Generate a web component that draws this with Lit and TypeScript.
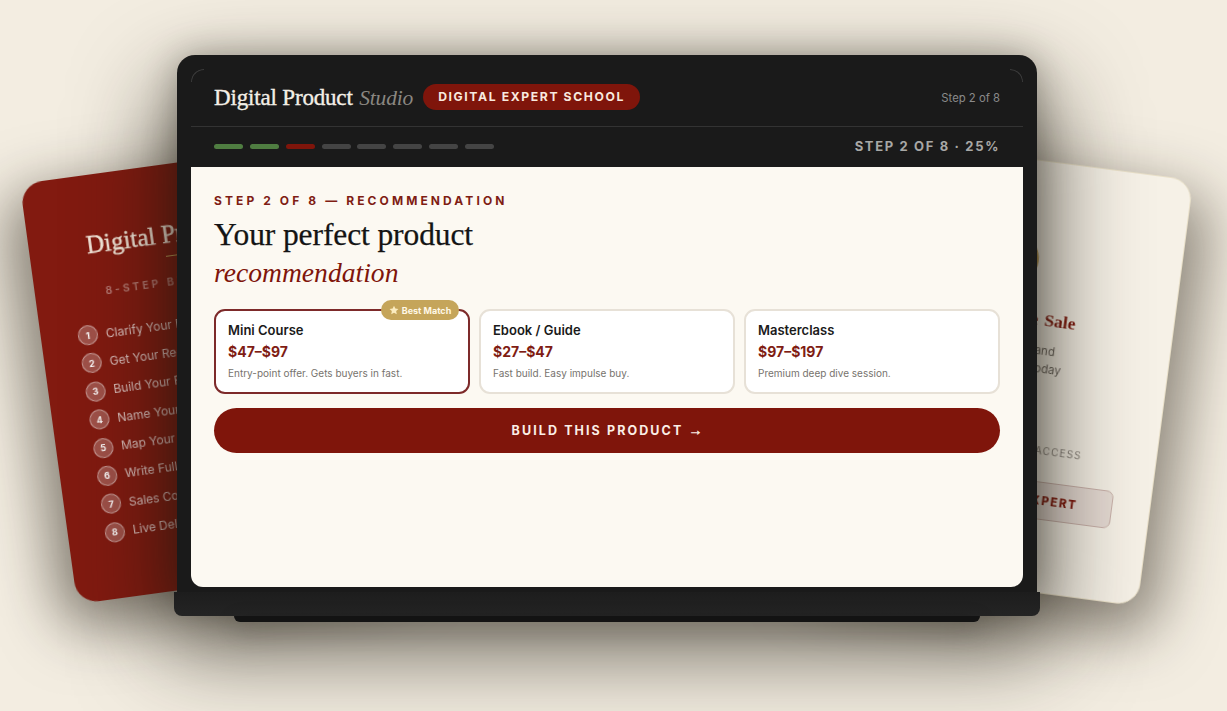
import { LitElement, html, css } from "lit";
import { customElement } from "lit/decorators.js";

const STEPS = ["Clarify Your Product", "Get Your Recommendation", "Build Your Framework", "Name Your Product", "Map Your Content", "Write Full Content", "Sales Copy", "Live Delivery"];
const SEGS = ["done", "done", "now", "", "", "", "", ""];
const PRODUCTS = [
  { name: "Mini Course", price: "$47–$97", desc: "Entry-point offer. Gets buyers in fast.", best: true },
  { name: "Ebook / Guide", price: "$27–$47", desc: "Fast build. Easy impulse buy.", best: false },
  { name: "Masterclass", price: "$97–$197", desc: "Premium deep dive session.", best: false },
];

@customElement("app-root")
export class AppRoot extends LitElement {
  static styles = css`
    :host { display: block; font-family: Inter, "Liberation Sans", sans-serif; }
    * { box-sizing: border-box; }
    .stage { position: relative; width: 1227px; height: 711px; overflow: hidden; background: #f3ede1; padding: 55px 0 0 174px; }

    .side { position: absolute; border-radius: 22px; display: flex; flex-direction: column; align-items: center; width: 340px; }
    .left { top: 159px; height: 424px; left: 47px; transform: rotate(-7.8deg); background: #821a10; padding-top: 56px; color: #fff; box-shadow: -12px 18px 60px 6px rgba(35,28,16,.55); filter: blur(.35px); }
    .right { top: 156px; height: 430px; left: 827px; transform: rotate(7.5deg); background: #f6f1e7; border: 1.5px solid #e9e0c9; padding-top: 72.5px; box-shadow: 14px 22px 60px 6px rgba(35,28,16,.5); filter: blur(.35px); }
    .card-title { font: 400 25px/28px "Liberation Serif", serif; white-space: nowrap; color: #f6e9dc; -webkit-text-stroke: .35px #f6e9dc; }
    .rule { width: 70px; height: 1px; margin-top: 7px; background: #c5a55a; }
    .card-label { margin-top: 19px; font-size: 10.5px; line-height: 14px; font-weight: 600; letter-spacing: 3px; color: rgba(255,255,255,.42); white-space: nowrap; }
    .steps { margin-top: 24px; align-self: stretch; padding-left: 37px; display: flex; flex-direction: column; gap: 8.4px; }
    .step { display: flex; align-items: center; gap: 8px; height: 20px; font-size: 12px; color: rgba(255,255,255,.72); white-space: nowrap; }
    .num { width: 20px; height: 20px; border-radius: 50%; display: flex; align-items: center; justify-content: center; background: rgba(255,255,255,.24); border: 1.5px solid rgba(255,255,255,.45); font-size: 9px; font-weight: 700; color: #fff; }

    .emblem { width: 54px; height: 54px; border-radius: 50%; background: #b8964e; }
    .sale-title { margin: 17px 6px 0 0; font: 700 17.5px/26px "Liberation Serif", serif; word-spacing: 2px; color: #7f150b; white-space: nowrap; }
    .sale-desc { margin-top: 9px; font-size: 11.5px; line-height: 18px; color: #6c6660; text-align: center; }
    .access { margin-top: 65px; font-size: 10px; line-height: 14px; letter-spacing: 1.2px; color: #87817a; white-space: nowrap; }
    .outline { margin-top: 24px; width: 264px; height: 38px; border: 1px solid #c9b1aa; border-radius: 7px; background: #e6dbd4; display: flex; align-items: center; justify-content: center; font-size: 11.5px; font-weight: 800; letter-spacing: 1.6px; color: #7f150b; white-space: nowrap; }

    .laptop { position: relative; width: 866px; display: flex; flex-direction: column; align-items: center; }
    .shell { width: 860px; height: 537px; border-radius: 18px 18px 0 0; background: #1a1a1a; padding: 14px 14px 5px; box-shadow: 0 44px 90px 12px rgba(30,25,15,.68), 0 0 34px rgba(30,25,15,.3); }
    .screen { position: relative; height: 100%; display: flex; flex-direction: column; border-radius: 12px; overflow: hidden; }
    .arc { position: absolute; top: 0; width: 13px; height: 13px; border-top: 1px solid #3c3c3c; }
    .arc.l { left: 0; border-left: 1px solid #3c3c3c; border-top-left-radius: 13px; }
    .arc.r { right: 0; border-right: 1px solid #3c3c3c; border-top-right-radius: 13px; }
    .head { height: 58px; flex: none; display: flex; align-items: center; padding: 0 23px; border-bottom: 1px solid #333; }
    .brand { font: 400 23px/28px "Liberation Serif", serif; color: #f3efe7; white-space: nowrap; -webkit-text-stroke: .35px #f3efe7; letter-spacing: -.17px; }
    .brand i { color: #8a8781; font-size: 21.5px; margin-left: 1px; -webkit-text-stroke: 0; }
    .pill { margin: -2px 0 0 10px; height: 26px; padding: 0 15px; border-radius: 13px; background: #7f150b; color: #f8e9df; display: flex; align-items: center; font-size: 12.2px; font-weight: 700; letter-spacing: 1.6px; white-space: nowrap; }
    .count { margin-left: auto; font-size: 11.3px; color: #8a8a8a; white-space: nowrap; }
    .prog { height: 40px; flex: none; display: flex; align-items: center; padding: 0 23px 2px; gap: 6.85px; }
    .seg { width: 29px; height: 5px; border-radius: 3px; background: #444; }
    .seg.done { background: #4f7d41; }
    .seg.now { background: #7f150b; }
    .pct { margin-left: auto; font-size: 13px; font-weight: 700; letter-spacing: 1.65px; color: #a8a8a6; white-space: nowrap; }

    .body { flex: 1; background: #fcf9f2; padding: 26px 23px 0; display: flex; flex-direction: column; }
    .eyebrow { font-size: 12px; line-height: 16px; font-weight: 700; letter-spacing: 3.1px; color: #7f1d14; white-space: nowrap; }
    h1 { margin: 7px 0 0; font: 400 31.5px/38px "Liberation Serif", serif; color: #141414; letter-spacing: -.1px; -webkit-text-stroke: .25px #141414; }
    h1 em { display: block; color: #7f150b; font-size: 27.6px; letter-spacing: 0; -webkit-text-stroke: 0; }
    .cards { margin-top: 17px; display: grid; grid-template-columns: repeat(3, 1fr); gap: 9px; }
    .card { position: relative; height: 85px; background: #fff; border: 2px solid #e7e1d7; border-radius: 11px; padding: 11px 12px; display: flex; flex-direction: column; }
    .card.best { border-color: #7d2a2a; }
    .name { font-size: 13px; line-height: 17px; font-weight: 600; color: #1a1a1a; }
    .price { margin-top: 4px; font-size: 14px; line-height: 18px; font-weight: 700; color: #7f1d14; }
    .desc { margin-top: 6px; font-size: 10px; line-height: 13px; color: #77736d; white-space: nowrap; }
    .badge { position: absolute; top: -11px; right: 9px; height: 20px; width: 78px; border-radius: 10px; background: #c5a55a; color: #fff8e6; display: flex; align-items: center; justify-content: center; gap: 3px; font-size: 9px; font-weight: 700; white-space: nowrap; }
    .badge svg { width: 10px; height: 10px; fill: #fbecc0; flex: none; }
    .cta { margin-top: 14px; height: 45px; border: 0; border-radius: 23px; background: #7f150b; color: #fbeee6; font: 700 12.5px Inter, sans-serif; letter-spacing: 2.1px; padding: 0 0 1px; }
    .arrow { font-family: "Liberation Sans", sans-serif; font-size: 14px; letter-spacing: 0; -webkit-text-stroke: .4px #fbeee6; }

    .base { width: 866px; height: 24px; background: linear-gradient(#1d1d1d, #242424); border-radius: 0 0 8px 8px; }
    .foot { width: 746px; height: 6px; background: #131313; border-radius: 0 0 6px 6px; box-shadow: 0 8px 22px rgba(20,16,10,.3); }
  `;

  render() {
    return html`<div class="stage">
      <div class="side left">
        <div class="card-title">Digital Product Studio</div>
        <div class="rule"></div>
        <div class="card-label">8-STEP BUILD BLUEPRINT</div>
        <div class="steps">
          ${STEPS.map((s, i) => html`<div class="step"><span class="num">${i + 1}</span><span>${s}</span></div>`)}
        </div>
      </div>
      <div class="side right">
        <div class="emblem"></div>
        <div class="sale-title">Launch a Live Sale</div>
        <div class="sale-desc">Your offer, copy and<br />sales page ready today</div>
        <div class="access">SECURE YOUR INSTANT ACCESS</div>
        <div class="outline">BECOME A DIGITAL EXPERT</div>
      </div>
      <div class="laptop">
        <div class="shell">
          <div class="screen">
            <span class="arc l"></span><span class="arc r"></span>
            <div class="head">
              <span class="brand">Digital Product <i>Studio</i></span>
              <span class="pill">DIGITAL EXPERT SCHOOL</span>
              <span class="count">Step 2 of 8</span>
            </div>
            <div class="prog">
              ${SEGS.map((c) => html`<span class="seg ${c}"></span>`)}
              <span class="pct">STEP 2 OF 8 · 25%</span>
            </div>
            <div class="body">
              <div class="eyebrow">STEP 2 OF 8 — RECOMMENDATION</div>
              <h1>Your perfect product<em>recommendation</em></h1>
              <div class="cards">
                ${PRODUCTS.map((p) => html`<div class="card ${p.best ? "best" : ""}">
                  ${p.best ? html`<span class="badge"><svg viewBox="0 0 24 24"><path d="M12 1.5l3.2 6.9 7.5.9-5.5 5.2 1.4 7.5L12 18.4l-6.6 3.6 1.4-7.5L1.3 9.3l7.5-.9z"/></svg>Best Match</span>` : ""}
                  <div class="name">${p.name}</div>
                  <div class="price">${p.price}</div>
                  <div class="desc">${p.desc}</div>
                </div>`)}
              </div>
              <button class="cta">BUILD THIS PRODUCT <span class="arrow">→</span></button>
            </div>
          </div>
        </div>
        <div class="base"></div>
        <div class="foot"></div>
      </div>
    </div>`;
  }
}
